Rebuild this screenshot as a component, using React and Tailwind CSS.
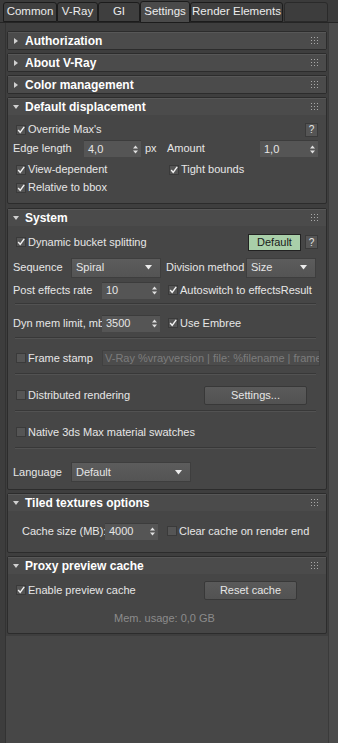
import React from 'react'

const font = { fontFamily: '"Liberation Sans", Arial, sans-serif' }

// tiny widgets used across the rollouts
const Grip = () => (
  <svg width="7" height="8" viewBox="0 0 7 8" className="shrink-0">
    {[0, 3, 6].map((y) =>
      [0, 3, 6].map((x) => <rect key={`${x}-${y}`} x={x} y={y} width="1" height="1" fill="#a8a8a8" />)
    )}
  </svg>
)

const Arrow = ({ open }) => (
  <svg width="6" height="6" viewBox="0 0 6 6" className="shrink-0">
    {open ? <path d="M0 1 L6 1 L3 5 Z" fill="#d0d0d0" /> : <path d="M1 0 L5 3 L1 6 Z" fill="#d0d0d0" />}
  </svg>
)

const Rollout = ({ title, open, children, className = '' }) => (
  <div className={`border border-[#2c2c2c] rounded-[2px] bg-[#464646] ${className}`}>
    <div className="h-[17px] flex items-center pl-[5px] pr-[8px] bg-[#4b4b4b] border-t border-[#575757]">
      <Arrow open={open} />
      <span className="ml-[6px] text-[12px] font-bold text-white leading-none">{title}</span>
      <div className="ml-auto">
        <Grip />
      </div>
    </div>
    {open && children}
  </div>
)

const Check = ({ checked, label, className = '' }) => (
  <div className={`flex items-center ${className}`}>
    <div className="w-[10px] h-[10px] bg-[#555] border border-[#3a3a3a] flex items-center justify-center">
      {checked && (
        <svg width="10" height="10" viewBox="0 0 10 10">
          <path d="M1.5 5 L4 8 L9 1" stroke="#f2f2f2" strokeWidth="1.8" fill="none" />
        </svg>
      )}
    </div>
    <span className="ml-[2px] text-[11px] text-[#e6e6e6] whitespace-nowrap">{label}</span>
  </div>
)

const Spinner = ({ value, w }) => (
  <div
    className={`${w} h-[17px] bg-[#555] border-t border-[#3c3c3c] flex items-center pl-[4px] pr-[3px] shrink-0`}
  >
    <span className="text-[11px] text-[#e6e6e6]">{value}</span>
    <svg width="5" height="9" viewBox="0 0 5 9" className="ml-auto">
      <path d="M0 3.5 L2.5 0.5 L5 3.5 Z M0 5.5 L2.5 8.5 L5 5.5 Z" fill="#e0e0e0" />
    </svg>
  </div>
)

const Dropdown = ({ value, w }) => (
  <div
    className={`${w} h-[20px] bg-gradient-to-b from-[#5c5c5c] to-[#545454] border border-[#3e3e3e] flex items-center pl-[4px] pr-[8px] shrink-0`}
  >
    <span className="text-[11px] text-[#e6e6e6]">{value}</span>
    <svg width="7" height="5" viewBox="0 0 7 5" className="ml-auto">
      <path d="M0 0 L7 0 L3.5 4.5 Z" fill="#ececec" />
    </svg>
  </div>
)

const Btn = ({ children, w }) => (
  <div
    className={`${w} h-[19px] rounded-[2px] bg-gradient-to-b from-[#5a5a5a] to-[#525252] border border-[#383838] flex items-center justify-center text-[11px] text-[#e6e6e6]`}
  >
    {children}
  </div>
)

const Help = () => (
  <div className="w-[13px] h-[14px] bg-[#555] border border-[#3a3a3a] flex items-center justify-center text-[10px] text-[#e6e6e6]">
    ?
  </div>
)

const Sep = ({ className = '' }) => (
  <div className={`h-[2px] mx-[2px] border-t border-[#383838] border-b border-b-[#525252] ${className}`} />
)

const tabs = ['Common', 'V-Ray', 'GI', 'Settings', 'Render Elements']
const tabW = ['w-[54px]', 'w-[41px]', 'w-[42px]', 'w-[50px]', 'w-[93px]']

export default function App() {
  return (
    <div style={font} className="w-[338px] h-[743px] bg-[#474747] flex flex-col overflow-hidden">
      {/* tab strip */}
      <div className="h-[23px] bg-[#3b3b3b] flex items-end pl-[3px] border-b border-[#252525] shrink-0">
        {tabs.map((t, i) => (
          <div
            key={t}
            className={`${tabW[i]} ${
              t === 'Settings' ? 'h-[22px] bg-[#4a4a4a] -mb-px' : 'h-[20px] bg-[#3f3f3f]'
            } border border-[#1c1c1c] rounded-t-[3px] flex items-center justify-center whitespace-nowrap text-[11.5px] text-[#ececec]`}
          >
            {t}
          </div>
        ))}
        <div className="ml-[1px] w-[44px] h-[20px] border border-[#2a2a2a] rounded-t-[3px] bg-[#3d3d3d]" />
      </div>

      <div className="flex flex-1">
        <div className="w-[6px] bg-[#3d3d3d] border-r border-[#333]" />
        <div className="w-[322px] bg-[#3e3e3e] flex flex-col gap-[3px] pt-[8px] px-[1px] self-start pb-[2px]">
          <Rollout title="Authorization" />
          <Rollout title="About V-Ray" />
          <Rollout title="Color management" />

          <Rollout title="Default displacement" open className="mb-[1px]">
            <div className="pl-[5px] pr-[8px] pt-[6px] pb-[7px]">
              <div className="h-[17px] flex items-center">
                <Check checked label="Override Max's" className="ml-[3px]" />
                <div className="ml-auto">
                  <Help />
                </div>
              </div>
              <div className="h-[17px] mt-[2px] flex items-center text-[11px] text-[#e6e6e6]">
                <span className="w-[71px]">Edge length</span>
                <Spinner value="4,0" w="w-[57px]" />
                <span className="ml-[4px] w-[22px]">px</span>
                <span>Amount</span>
                <div className="ml-auto">
                  <Spinner value="1,0" w="w-[58px]" />
                </div>
              </div>
              <div className="h-[17px] mt-[4px] flex items-center">
                <Check checked label="View-dependent" className="ml-[3px] w-[153px]" />
                <Check checked label="Tight bounds" />
              </div>
              <div className="h-[17px] mt-[1px] flex items-center">
                <Check checked label="Relative to bbox" className="ml-[3px]" />
              </div>
            </div>
          </Rollout>

          <Rollout title="System" open>
            <div className="pl-[5px] pr-[8px] pt-[7px] pb-[7px] text-[11px] text-[#e6e6e6]">
              <div className="h-[18px] flex items-center">
                <Check checked label="Dynamic bucket splitting" className="ml-[3px]" />
                <div className="ml-auto w-[53px] h-[17px] bg-[#a9cfa9] border border-[#222] flex items-center justify-center text-[#1a1a1a]">
                  Default
                </div>
                <div className="ml-[4px]">
                  <Help />
                </div>
              </div>
              <div className="h-[21px] mt-[6px] flex items-center">
                <span className="w-[58px]">Sequence</span>
                <Dropdown value="Spiral" w="w-[90px]" />
                <span className="ml-[5px] w-[80px]">Division method</span>
                <Dropdown value="Size" w="w-[70px]" />
              </div>
              <div className="h-[18px] mt-[3px] flex items-center">
                <span className="w-[89px]">Post effects rate</span>
                <Spinner value="10" w="w-[58px]" />
                <Check checked label="Autoswitch to effectsResult" className="ml-[8px]" />
              </div>
              <Sep className="mt-[4px]" />
              <div className="h-[18px] mt-[9px] flex items-center">
                <span className="w-[89px] overflow-hidden whitespace-nowrap">Dyn mem limit, mb</span>
                <Spinner value="3500" w="w-[58px]" />
                <Check checked label="Use Embree" className="ml-[8px]" />
              </div>
              <Sep className="mt-[5px]" />
              <div className="h-[18px] mt-[10px] flex items-center">
                <Check label="Frame stamp" className="ml-[3px] w-[86px]" />
                <div className="flex-1 h-[16px] bg-[#4c4c4c] border border-[#404040] pl-[2px] flex items-center overflow-hidden whitespace-nowrap text-[#7c7c7c] -mr-[2px]">
                  V-Ray %vrayversion | file: %filename | frame: %frame
                </div>
              </div>
              <Sep className="mt-[6px]" />
              <div className="h-[20px] mt-[10px] flex items-center">
                <Check label="Distributed rendering" className="ml-[3px] w-[188px]" />
                <Btn w="w-[103px]">Settings...</Btn>
              </div>
              <Sep className="mt-[5px]" />
              <div className="h-[18px] mt-[11px] flex items-center">
                <Check label="Native 3ds Max material swatches" className="ml-[3px]" />
              </div>
              <Sep className="mt-[6px]" />
              <div className="h-[20px] mt-[13px] flex items-center">
                <span className="w-[58px]">Language</span>
                <Dropdown value="Default" w="w-[120px]" />
              </div>
            </div>
          </Rollout>

          <Rollout title="Tiled textures options" open>
            <div className="pl-[14px] pr-[8px] pt-[11px] pb-[12px] text-[11px] text-[#e6e6e6]">
              <div className="h-[18px] flex items-center">
                <span className="w-[83px] whitespace-nowrap">Cache size (MB):</span>
                <Spinner value="4000" w="w-[53px]" />
                <Check label="Clear cache on render end" className="ml-[9px]" />
              </div>
            </div>
          </Rollout>

          <Rollout title="Proxy preview cache" open>
            <div className="pl-[5px] pr-[8px] pt-[6px] pb-[8px] text-[11px] text-[#e6e6e6]">
              <div className="h-[20px] flex items-center">
                <Check checked label="Enable preview cache" className="ml-[3px] w-[188px]" />
                <Btn w="w-[93px]">Reset cache</Btn>
              </div>
              <div className="h-[14px] mt-[11px] flex items-center justify-center text-[#8c8c8c] pr-[2px]">
                Mem. usage: 0,0 GB
              </div>
            </div>
          </Rollout>
        </div>
        <div className="w-[10px] bg-[#4b4b4b] border-l border-[#3a3a3a]" />
      </div>
    </div>
  )
}
